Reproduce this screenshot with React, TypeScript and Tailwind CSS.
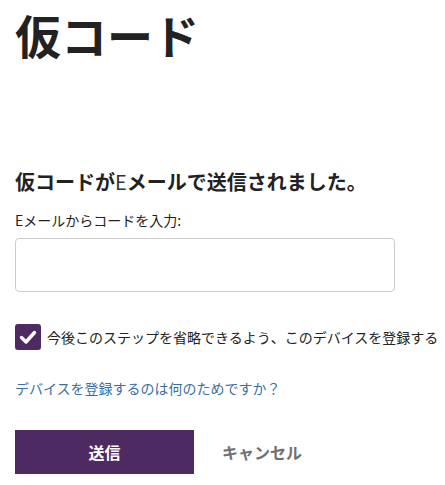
const font = { fontFamily: '"Noto Sans CJK JP", "Noto Sans", sans-serif' };

const CheckIcon = () => (
  <svg viewBox="0 0 26 26" className="h-[26px] w-[26px]">
    <path d="M6.5 13.5l4.5 4.5 8.5-9.5" fill="none" stroke="white" strokeWidth="3.4" strokeLinecap="round" strokeLinejoin="round" />
  </svg>
);

const App = () => {
  return (
    <div className="min-h-[485px] w-[445px] bg-white pl-[15px] text-[#222]" style={font}>
      <div className="flex flex-col items-start pt-[7px]">
        <h1 className="text-[46px] font-bold leading-[1.2]">仮コード</h1>

        <h2 className="mt-[110px] text-[20px] font-bold leading-none">
          仮コードが<span className="font-normal text-[#333]">E</span>メールで送信されました。
        </h2>

        <label className="mt-[21px] text-[14px] leading-none">Eメールからコードを入力:</label>

        <input
          type="text"
          className="mt-[11px] h-[54px] w-[380px] rounded-[4px] border border-[#cccccc] px-3 outline-none"
        />

        <div className="mt-[32px] flex items-center gap-[6px]">
          <div className="flex h-[26px] w-[26px] items-center justify-center rounded-[3px] bg-[#4e2a63]">
            <CheckIcon />
          </div>
          <span className="whitespace-nowrap text-[14px] leading-none">
            今後このステップを省略できるよう、このデバイスを登録する
          </span>
        </div>

        <a href="#" className="mt-[31px] text-[14px] leading-none text-[#3a6ea5]">
          デバイスを登録するのは何のためですか？
        </a>

        <div className="mt-[35px] flex items-center gap-[28px]">
          <button className="h-[44px] w-[179px] bg-[#4e2a63] text-[16px] font-bold text-white">送信</button>
          <button className="text-[16px] font-bold text-[#707070]">キャンセル</button>
        </div>
      </div>
    </div>
  );
};

export default App;
